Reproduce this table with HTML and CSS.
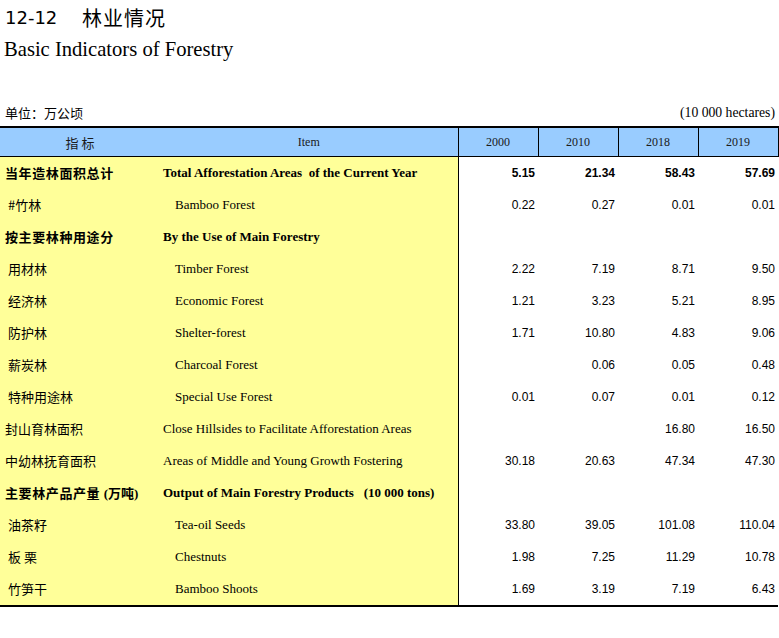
FILE: index.html
```html
<!DOCTYPE html>
<html lang="zh">
<head>
<meta charset="utf-8">
<link rel="stylesheet" href="styles.css">
</head>
<body>
<div class="title"><span class="num">12-12</span><span class="cn">林业情况</span></div>
<div class="subtitle">Basic Indicators of Forestry</div>
<div class="unit"><span class="unit-cn">单位：万公顷</span><span class="unit-en">(10 000 hectares)</span></div>
<table class="data">
<colgroup><col class="c1"><col class="c2"><col class="cy"><col class="cy"><col class="cy"><col class="cy"></colgroup>
<thead>
<tr><th class="h-cn">指 标</th><th class="h-en">Item</th><th class="h-y">2000</th><th class="h-y">2010</th><th class="h-y">2018</th><th class="h-y last">2019</th></tr>
</thead>
<tbody>
<tr class="bold"><td class="cn">当年造林面积总计</td><td class="en">Total Afforestation Areas&nbsp; of the Current Year</td><td class="n">5.15</td><td class="n">21.34</td><td class="n">58.43</td><td class="n">57.69</td></tr>
<tr><td class="cn sub">#竹林</td><td class="en sub">Bamboo Forest</td><td class="n">0.22</td><td class="n">0.27</td><td class="n">0.01</td><td class="n">0.01</td></tr>
<tr class="bold"><td class="cn">按主要林种用途分</td><td class="en">By the Use of Main Forestry</td><td class="n"></td><td class="n"></td><td class="n"></td><td class="n"></td></tr>
<tr><td class="cn sub">用材林</td><td class="en sub">Timber Forest</td><td class="n">2.22</td><td class="n">7.19</td><td class="n">8.71</td><td class="n">9.50</td></tr>
<tr><td class="cn sub">经济林</td><td class="en sub">Economic Forest</td><td class="n">1.21</td><td class="n">3.23</td><td class="n">5.21</td><td class="n">8.95</td></tr>
<tr><td class="cn sub">防护林</td><td class="en sub">Shelter-forest</td><td class="n">1.71</td><td class="n">10.80</td><td class="n">4.83</td><td class="n">9.06</td></tr>
<tr><td class="cn sub">薪炭林</td><td class="en sub">Charcoal Forest</td><td class="n"></td><td class="n">0.06</td><td class="n">0.05</td><td class="n">0.48</td></tr>
<tr><td class="cn sub">特种用途林</td><td class="en sub">Special Use Forest</td><td class="n">0.01</td><td class="n">0.07</td><td class="n">0.01</td><td class="n">0.12</td></tr>
<tr><td class="cn">封山育林面积</td><td class="en">Close Hillsides to Facilitate Afforestation Areas</td><td class="n"></td><td class="n"></td><td class="n">16.80</td><td class="n">16.50</td></tr>
<tr><td class="cn">中幼林抚育面积</td><td class="en">Areas of Middle and Young Growth Fostering</td><td class="n">30.18</td><td class="n">20.63</td><td class="n">47.34</td><td class="n">47.30</td></tr>
<tr class="bold"><td class="cn">主要林产品产量 <span class="paren">(万吨)</span></td><td class="en">Output of Main Forestry Products&nbsp;&nbsp; (10 000 tons)</td><td class="n"></td><td class="n"></td><td class="n"></td><td class="n"></td></tr>
<tr><td class="cn sub">油茶籽</td><td class="en sub">Tea-oil Seeds</td><td class="n">33.80</td><td class="n">39.05</td><td class="n">101.08</td><td class="n">110.04</td></tr>
<tr><td class="cn sub">板&nbsp;栗</td><td class="en sub">Chestnuts</td><td class="n">1.98</td><td class="n">7.25</td><td class="n">11.29</td><td class="n">10.78</td></tr>
<tr><td class="cn sub">竹笋干</td><td class="en sub">Bamboo Shoots</td><td class="n">1.69</td><td class="n">3.19</td><td class="n">7.19</td><td class="n">6.43</td></tr>
</tbody>
</table>
</body>
</html>
```
FILE: styles.css
```css
html, body {
  margin: 0;
  padding: 0;
  background: #fff;
  color: #000;
}
body {
  width: 779px;
}
.title {
  padding-top: 6px;
  padding-left: 5px;
  height: 24px;
  line-height: 24px;
  font-family: "Noto Sans CJK SC", "DejaVu Sans", sans-serif;
  font-size: 20px;
  display: flex;
}
.title .num {
  width: 77px;
  font-family: "DejaVu Sans", sans-serif;
  font-size: 18px;
}
.title .cn {
  letter-spacing: 1px;
}
.subtitle {
  margin-top: 6px;
  padding-left: 4px;
  height: 26px;
  line-height: 26px;
  font-family: "Liberation Serif", serif;
  font-size: 20.6px;
}
.unit {
  margin-top: 43px;
  height: 16px;
  line-height: 16px;
  display: flex;
  justify-content: space-between;
  padding-left: 5px;
  padding-right: 4px;
}
.unit-cn {
  font-family: "Noto Sans CJK SC", sans-serif;
  font-size: 13px;
}
.unit-en {
  font-family: "Liberation Serif", serif;
  font-size: 13.7px;
}
.data {
  margin-top: 5px;
  border-collapse: collapse;
  table-layout: fixed;
  width: 778px;
  border-top: 2px solid #000;
  border-bottom: 2px solid #000;
}
.c1 { width: 160px; }
.c2 { width: 298px; }
.cy { width: 80px; }
.data th {
  background: #99ccff;
  height: 28px;
  padding: 0;
  font-weight: normal;
  border-bottom: 1px solid #000;
  text-align: center;
  color: #1a1a1a;
}
.h-cn {
  font-family: "Noto Sans CJK SC", sans-serif;
  font-size: 13px;
}
.h-en, .h-y {
  font-family: "Liberation Serif", serif;
  font-size: 12px;
}
.h-en, .h-y {
  border-right: 1px solid #000;
}
.data td {
  height: 32px;
  padding: 0;
  vertical-align: middle;
}
.data td.cn {
  background: #ffff99;
  font-family: "Noto Sans CJK SC", sans-serif;
  font-size: 13px;
  padding-left: 5px;
  height: 30px;
  padding-bottom: 2px;
  white-space: nowrap;
}
.data td.cn.sub {
  padding-left: 8px;
}
.data td.en {
  background: #ffff99;
  font-family: "Liberation Serif", serif;
  font-size: 13px;
  padding-left: 3px;
  border-right: 1px solid #000;
  white-space: nowrap;
}
.data td.en.sub {
  padding-left: 15px;
}
.data td.n {
  font-family: "Liberation Sans", sans-serif;
  font-size: 12px;
  text-align: right;
  padding-right: 3px;
}
.bold td.cn {
  font-weight: bold;
  letter-spacing: 0.6px;
}
.bold td.en, .bold td.n {
  font-weight: bold;
}
.paren {
  font-family: "Liberation Serif", "Noto Sans CJK SC", serif;
  letter-spacing: 0;
}
```
